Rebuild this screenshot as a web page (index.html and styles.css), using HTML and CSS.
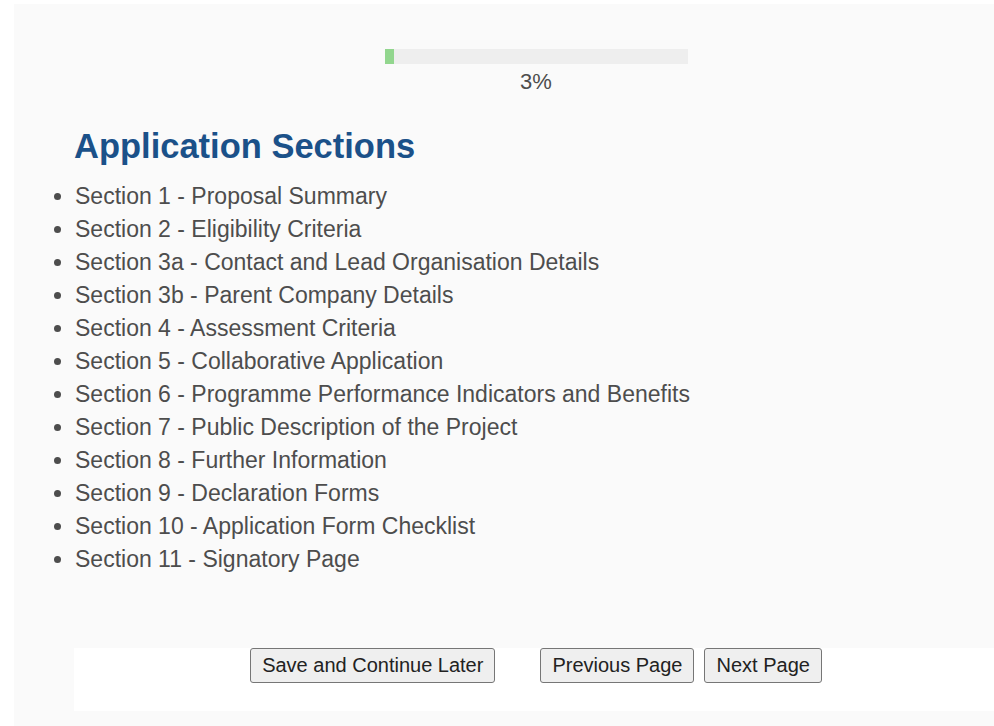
FILE: index.html
```html
<!DOCTYPE html>
<html lang="en">
<head>
<meta charset="utf-8">
<title>Application Sections</title>
<link rel="stylesheet" href="styles.css">
</head>
<body>
<div class="page">
  <div class="progress">
    <div class="progress-track"><div class="progress-fill" style="width: 3%"></div></div>
    <div class="progress-label">3%</div>
  </div>
  <h1 class="title">Application Sections</h1>
  <ul class="sections">
    <li>Section 1 - Proposal Summary</li>
    <li>Section 2 - Eligibility Criteria</li>
    <li>Section 3a - Contact and Lead Organisation Details</li>
    <li>Section 3b - Parent Company Details</li>
    <li>Section 4 - Assessment Criteria</li>
    <li>Section 5 - Collaborative Application</li>
    <li>Section 6 - Programme Performance Indicators and Benefits</li>
    <li>Section 7 - Public Description of the Project</li>
    <li>Section 8 - Further Information</li>
    <li>Section 9 - Declaration Forms</li>
    <li>Section 10 - Application Form Checklist</li>
    <li>Section 11 - Signatory Page</li>
  </ul>
  <div class="actions">
    <button class="btn btn-save" type="button">Save and Continue Later</button>
    <button class="btn" type="button">Previous Page</button>
    <button class="btn" type="button">Next Page</button>
  </div>
</div>
</body>
</html>
```
FILE: styles.css
```css
html, body {
  margin: 0;
  padding: 0;
  background: #ffffff;
}

body {
  font-family: "Liberation Sans", Arial, sans-serif;
  color: #4d4d4d;
}

.page {
  margin: 4px 0 0 14px;
  padding: 45px 0 15px 60px;
  background: #fafafa;
  min-height: 662px;
}

.progress {
  display: flex;
  flex-direction: column;
  align-items: center;
  padding-left: 4px;
}

.progress-track {
  width: 303px;
  height: 15px;
  background: #eeeeee;
}

.progress-fill {
  height: 100%;
  background: #92d68e;
}

.progress-label {
  margin-top: 5px;
  font-size: 22px;
  line-height: 26px;
  color: #4d4d4d;
}

.title {
  margin: 31px 0 0 0;
  font-size: 34.5px;
  line-height: 40px;
  font-weight: bold;
  color: #1b5189;
}

.sections {
  margin: 14px 0 0;
  padding: 0 0 0 1px;
  font-size: 23px;
  line-height: 33px;
  color: #4d4d4d;
}

.actions {
  margin-top: 72px;
  height: 63px;
  padding-left: 4px;
  background: #ffffff;
  display: flex;
  justify-content: center;
  align-items: flex-start;
  gap: 10px;
}

.btn {
  font-family: "Liberation Sans", Arial, sans-serif;
  font-size: 20px;
  line-height: 23px;
  color: #222222;
  padding: 5px 11px;
  background: #efefef;
  border: 1px solid #767676;
  border-radius: 3px;
}

.btn-save {
  margin-right: 35px;
}
```
